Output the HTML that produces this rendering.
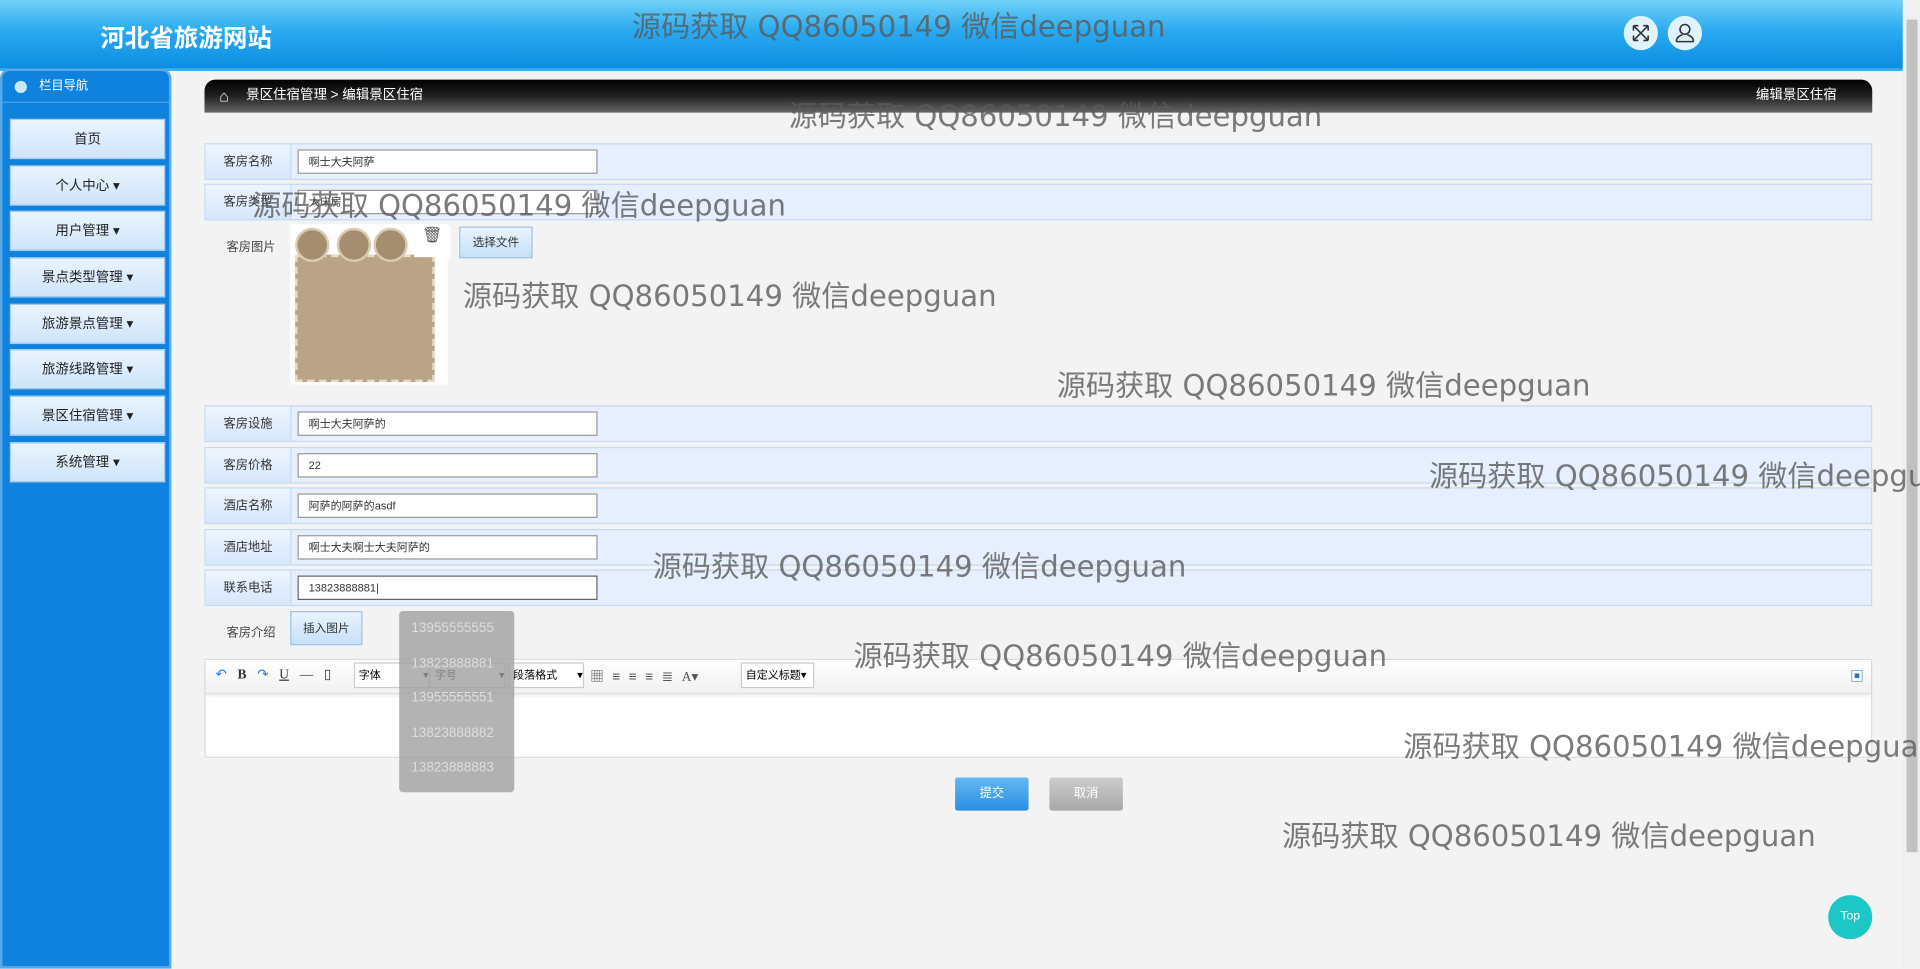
<!DOCTYPE html>
<html><head><meta charset="utf-8"><style>
*{margin:0;padding:0;box-sizing:border-box}
body{width:1920px;height:968px;overflow:hidden;background:#f3f3f3;font-family:"Liberation Sans","Noto Sans CJK SC",sans-serif}
#s{position:absolute;left:0;top:0;width:1568px;height:791px;transform:scale(1.22449);transform-origin:0 0;background:#f3f3f3}
.a{position:absolute}
.hdr{left:0;top:0;width:1554px;height:58px;background:linear-gradient(180deg,#6fd0f7 0%,#29aaf0 45%,#0d8de2 100%);border-bottom:2px solid #38b2ee}
.title{left:82px;top:15px;color:#fff;font-size:20px;font-weight:bold}
.circ{width:28px;height:28px;border-radius:50%;background:#e0f2fc;top:13px}
.side{left:0;top:56px;width:140px;height:735px;background:#0f82dd;border-radius:8px 8px 0 0;border:2px solid #5aa9e6}
.navh{left:2px;top:58px;width:136px;height:26px;color:#fff;font-size:10px;line-height:26px;padding-left:30px;border-bottom:1px solid #4a9fe4}
.item{left:8px;width:127px;height:33px;background:linear-gradient(#eaf4fe,#cfe4fa);border:1px solid #a9cdf0;font-size:11px;color:#222;text-align:center;line-height:33px}
.bc{left:167px;top:65px;width:1362px;height:27px;border-radius:9px 9px 0 0;background:linear-gradient(#000 0%,#222 50%,#666 100%);color:#fff;font-size:11px;line-height:27px}
.row{left:167px;width:1362px;height:30px;background:#e5effd;border:1px solid #c6d9f0}
.lab{position:absolute;left:0;top:0;width:70px;height:28px;background:linear-gradient(#eef5fe,#d6e7fb);border-right:1px solid #c6d9f0;font-size:10px;color:#333;text-align:center;line-height:30px}
.inp{position:absolute;left:75px;top:4px;width:245px;height:20px;background:#fff;border:1px solid #999;font-size:9px;line-height:18px;padding-left:8px;color:#333}
.btn{background:linear-gradient(#e9f3fd,#c7e0f8);border:1px solid #9cc3e8;font-size:9.5px;color:#333;text-align:center}
.wm{color:rgba(90,90,90,.8);font-size:23.8px;white-space:nowrap;font-family:"DejaVu Sans","Noto Sans CJK SC",sans-serif;letter-spacing:0}
.lb{font-size:10px;color:#444}
.sel{top:541px;height:21px;background:#fff;border:1px solid #ccc;font-size:9px;line-height:19px;padding-left:3px}
.dd{left:326px;top:499px;width:94px;height:148px;background:rgba(160,160,160,.8);border-radius:3px}
.dd div{height:28.5px;line-height:28.5px;color:#ddd;font-size:11px;padding-left:10px}
</style></head><body><div id="s">
<div class="a hdr"></div>
<div class="a title">河北省旅游网站</div>
<div class="a circ" style="left:1326px"><svg width="28" height="28" viewBox="0 0 28 28" fill="none" stroke="#333" stroke-width="1.3"><path d="M8 8l12 12M20 8L8 20M8 8h4M8 8v4M20 8h-4M20 8v4M8 20h4M8 20v-4M20 20h-4M20 20v-4"/></svg></div>
<div class="a circ" style="left:1362px"><svg width="28" height="28" viewBox="0 0 28 28" fill="none" stroke="#333" stroke-width="1.3"><circle cx="14" cy="11" r="4"/><path d="M7 21c0-4 3-5 5-5.5M21 21c0-4-3-5-5-5.5M7 21h14"/></svg></div>
<div class="a" style="left:1554px;top:0;width:14px;height:791px;background:#f0f0f0"></div>
<div class="a" style="left:1557px;top:16px;width:9px;height:680px;background:#c1c1c1"></div>
<div class="a side"></div>
<div class="a navh"><span style="position:absolute;left:10px;top:8px;width:10px;height:10px;border-radius:50%;background:#cde6fb"></span>栏目导航</div>
<div class="a item" style="top:97px">首页</div>
<div class="a item" style="top:135px">个人中心 ▾</div>
<div class="a item" style="top:172px">用户管理 ▾</div>
<div class="a item" style="top:210px">景点类型管理 ▾</div>
<div class="a item" style="top:248px">旅游景点管理 ▾</div>
<div class="a item" style="top:285px">旅游线路管理 ▾</div>
<div class="a item" style="top:323px">景区住宿管理 ▾</div>
<div class="a item" style="top:361px">系统管理 ▾</div>
<div class="a bc"><span style="position:absolute;left:12px;font-size:13px">⌂</span><span style="position:absolute;left:34px">景区住宿管理 &gt; 编辑景区住宿</span><span style="position:absolute;right:29px">编辑景区住宿</span></div>
<div class="a row" style="top:117px"><div class="lab">客房名称</div><div class="inp">啊士大夫阿萨</div></div>
<div class="a row" style="top:150px"><div class="lab">客房类型</div><div class="inp">大床房</div></div>
<div class="a lb" style="left:185px;top:193px">客房图片</div>
<div class="a" style="left:237px;top:183px;width:129px;height:131px;background:#fff"></div>
<div class="a" style="left:241px;top:208px;width:114px;height:104px;background:#b9a487;border:2px dashed #e8dcc6"></div>
<div class="a" style="left:241px;top:186px;width:28px;height:28px;border-radius:50%;background:#a48e6f;border:2px solid #d9cbb0"></div>
<div class="a" style="left:275px;top:186px;width:28px;height:28px;border-radius:50%;background:#a48e6f;border:2px solid #d9cbb0"></div>
<div class="a" style="left:305px;top:186px;width:28px;height:28px;border-radius:50%;background:#a48e6f;border:2px solid #d9cbb0"></div>
<div class="a" style="left:338px;top:184px;width:30px;height:26px;background:#fff;font-size:13px;text-align:center;color:#555">🗑</div>
<div class="a btn" style="left:375px;top:185px;width:60px;height:26px;line-height:26px">选择文件</div>
<div class="a row" style="top:331px"><div class="lab">客房设施</div><div class="inp">啊士大夫阿萨的</div></div>
<div class="a row" style="top:365px"><div class="lab">客房价格</div><div class="inp">22</div></div>
<div class="a row" style="top:398px"><div class="lab">酒店名称</div><div class="inp">阿萨的阿萨的asdf</div></div>
<div class="a row" style="top:432px"><div class="lab">酒店地址</div><div class="inp">啊士大夫啊士大夫阿萨的</div></div>
<div class="a row" style="top:465px"><div class="lab">联系电话</div><div class="inp" style="border-color:#666">13823888881|</div></div>
<div class="a lb" style="left:185px;top:508px">客房介绍</div>
<div class="a btn" style="left:237px;top:499px;width:59px;height:28px;line-height:28px">插入图片</div>
<div class="a" style="left:167px;top:538px;width:1362px;height:81px;background:#fff;border:1px solid #ddd"></div>
<div class="a" style="left:168px;top:539px;width:1360px;height:28px;background:linear-gradient(#fff,#f1f1f1);border-bottom:1px solid #ddd;box-shadow:0 2px 3px rgba(0,0,0,.08)"></div>
<div class="a" style="left:176px;top:544px;font-size:11px;color:#333;font-family:'Liberation Serif',serif;word-spacing:6px"><span style="color:#2a7fd0">↶</span> <b>B</b> <span style="color:#2a7fd0">↷</span> <u>U</u> — ▯</div>
<div class="a sel" style="left:289px;width:62px">字体 <span style="float:right">▾</span></div>
<div class="a sel" style="left:351px;width:62px">字号 <span style="float:right">▾</span></div>
<div class="a sel" style="left:415px;width:62px">段落格式 <span style="float:right">▾</span></div>
<div class="a" style="left:482px;top:544px;font-size:11px;color:#555;word-spacing:4px">▦ ≡ ≡ ≡ ≣ <span style="font-family:'Liberation Serif',serif">A</span>▾</div>
<div class="a sel" style="left:605px;width:60px">自定义标题▾</div>
<div class="a" style="left:1511px;top:544px;font-size:11px;color:#2a6fb0">▣</div>
<div class="a dd"><div>13955555555</div><div>13823888881</div><div>13955555551</div><div>13823888882</div><div>13823888883</div></div>
<div class="a" style="left:780px;top:635px;width:60px;height:27px;background:linear-gradient(#63b8f4,#2a8fe0);color:#fff;font-size:10px;text-align:center;line-height:27px;border-radius:2px">提交</div>
<div class="a" style="left:857px;top:635px;width:60px;height:27px;background:linear-gradient(#ccc,#a8a8a8);color:#fff;font-size:10px;text-align:center;line-height:27px;border-radius:2px">取消</div>
<div class="a" style="left:1493px;top:731px;width:36px;height:36px;border-radius:50%;background:#1cc7c5;color:#fff;font-size:10px;text-align:center;line-height:36px">Top</div>
<div class="a wm" style="left:516px;top:2px">源码获取 QQ86050149 微信deepguan</div>
<div class="a wm" style="left:644px;top:75px">源码获取 QQ86050149 微信deepguan</div>
<div class="a wm" style="left:206px;top:148px">源码获取 QQ86050149 微信deepguan</div>
<div class="a wm" style="left:378px;top:222px">源码获取 QQ86050149 微信deepguan</div>
<div class="a wm" style="left:863px;top:295px">源码获取 QQ86050149 微信deepguan</div>
<div class="a wm" style="left:1167px;top:369px">源码获取 QQ86050149 微信deepguan</div>
<div class="a wm" style="left:533px;top:443px">源码获取 QQ86050149 微信deepguan</div>
<div class="a wm" style="left:697px;top:516px">源码获取 QQ86050149 微信deepguan</div>
<div class="a wm" style="left:1146px;top:590px">源码获取 QQ86050149 微信deepguan</div>
<div class="a wm" style="left:1047px;top:663px">源码获取 QQ86050149 微信deepguan</div>
</div></body></html>
